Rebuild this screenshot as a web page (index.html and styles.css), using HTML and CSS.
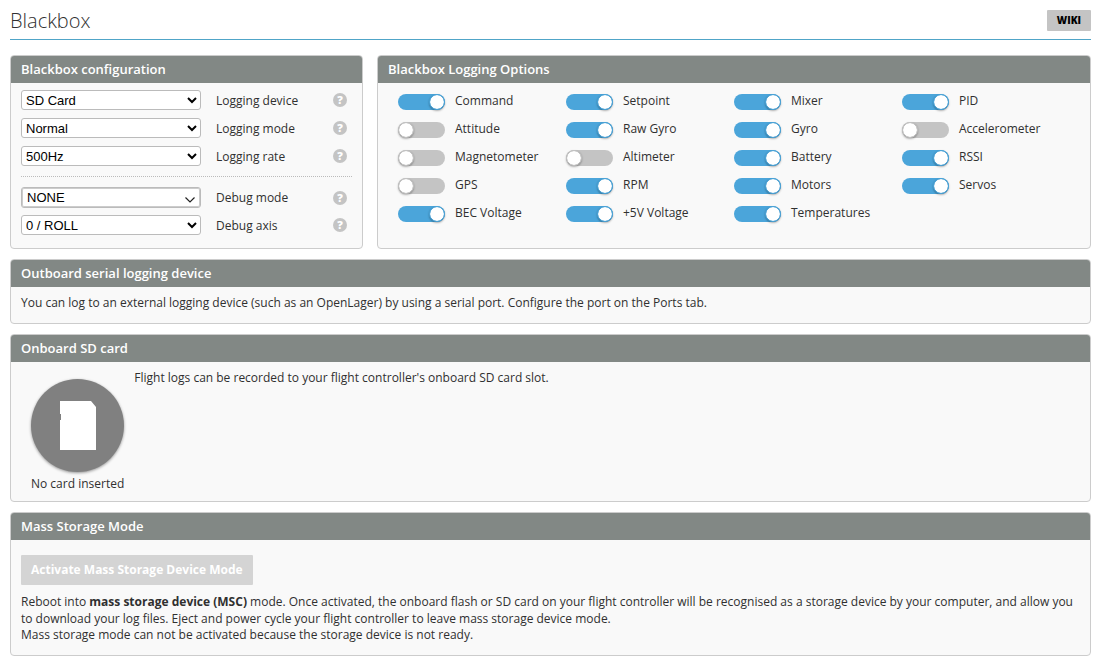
FILE: index.html
```html
<!DOCTYPE html>
<html lang="en">
<head>
<meta charset="utf-8">
<title>Blackbox</title>
<link rel="stylesheet" href="styles.css">
</head>
<body>
<main class="page">
  <header class="page-head">
    <h1 class="page-title">Blackbox</h1>
    <a class="wiki" href="#wiki">WIKI</a>
  </header>

  <div class="top-row">
    <section class="panel config">
      <h2 class="panel-title">Blackbox configuration</h2>
      <div class="config-body">
        <div class="field"><select class="select" id="device"><option>SD Card</option></select><label for="device">Logging device</label><button class="help" type="button" aria-label="Help for logging device">?</button></div>
        <div class="field"><select class="select" id="mode"><option>Normal</option></select><label for="mode">Logging mode</label><button class="help" type="button" aria-label="Help for logging mode">?</button></div>
        <div class="field"><select class="select" id="rate"><option>500Hz</option></select><label for="rate">Logging rate</label><button class="help" type="button" aria-label="Help for logging rate">?</button></div>
        <hr class="divider">
        <div class="field"><select class="select select-search" id="debug"><option>NONE</option></select><label for="debug">Debug mode</label><button class="help" type="button" aria-label="Help for debug mode">?</button></div>
        <div class="field"><select class="select" id="axis"><option>0 / ROLL</option></select><label for="axis">Debug axis</label><button class="help" type="button" aria-label="Help for debug axis">?</button></div>
      </div>
    </section>

    <section class="panel options">
      <h2 class="panel-title">Blackbox Logging Options</h2>
      <div class="options-grid">
        <label class="option"><input class="toggle" type="checkbox" checked><span>Command</span></label>
        <label class="option"><input class="toggle" type="checkbox" checked><span>Setpoint</span></label>
        <label class="option"><input class="toggle" type="checkbox" checked><span>Mixer</span></label>
        <label class="option"><input class="toggle" type="checkbox" checked><span>PID</span></label>
        <label class="option"><input class="toggle" type="checkbox"><span>Attitude</span></label>
        <label class="option"><input class="toggle" type="checkbox" checked><span>Raw Gyro</span></label>
        <label class="option"><input class="toggle" type="checkbox" checked><span>Gyro</span></label>
        <label class="option"><input class="toggle" type="checkbox"><span>Accelerometer</span></label>
        <label class="option"><input class="toggle" type="checkbox"><span>Magnetometer</span></label>
        <label class="option"><input class="toggle" type="checkbox"><span>Altimeter</span></label>
        <label class="option"><input class="toggle" type="checkbox" checked><span>Battery</span></label>
        <label class="option"><input class="toggle" type="checkbox" checked><span>RSSI</span></label>
        <label class="option"><input class="toggle" type="checkbox"><span>GPS</span></label>
        <label class="option"><input class="toggle" type="checkbox" checked><span>RPM</span></label>
        <label class="option"><input class="toggle" type="checkbox" checked><span>Motors</span></label>
        <label class="option"><input class="toggle" type="checkbox" checked><span>Servos</span></label>
        <label class="option"><input class="toggle" type="checkbox" checked><span>BEC Voltage</span></label>
        <label class="option"><input class="toggle" type="checkbox" checked><span>+5V Voltage</span></label>
        <label class="option"><input class="toggle" type="checkbox" checked><span>Temperatures</span></label>
      </div>
    </section>
  </div>

  <section class="panel">
    <h2 class="panel-title">Outboard serial logging device</h2>
    <p class="note">You can log to an external logging device (such as an OpenLager) by using a serial port. Configure the port on the Ports tab.</p>
  </section>

  <section class="panel">
    <h2 class="panel-title">Onboard SD card</h2>
    <div class="sdcard">
      <div class="sdcard-status">
        <div class="sdcard-disc">
          <svg class="sdcard-icon" viewBox="0 0 36 49" aria-hidden="true"><path fill="#fff" d="M0 0H31L36 6V49H0V19H1V13H0Z"/></svg>
        </div>
        <span>No card inserted</span>
      </div>
      <p class="sdcard-note">Flight logs can be recorded to your flight controller's onboard SD card slot.</p>
    </div>
  </section>

  <section class="panel">
    <h2 class="panel-title">Mass Storage Mode</h2>
    <div class="msc">
      <button class="msc-button" type="button" disabled>Activate Mass Storage Device Mode</button>
      <p>Reboot into <strong>mass storage device (MSC)</strong> mode. Once activated, the onboard flash or SD card on your flight controller will be recognised as a storage device by your computer, and allow you to download your log files. Eject and power cycle your flight controller to leave mass storage device mode.</p>
      <p class="msc-warning">Mass storage mode can not be activated because the storage device is not ready.</p>
    </div>
  </section>
</main>
</body>
</html>
```
FILE: styles.css
```css
*, *::before { box-sizing: border-box; }

body {
  margin: 0;
  background: #fff;
  color: #303030;
  font-family: "Open Sans", "Liberation Sans", sans-serif;
  font-size: 12px;
  line-height: 17px;
}

h1, h2, p { margin: 0; }

.page {
  display: flex;
  flex-direction: column;
  gap: 10px;
  padding: 0 9px 10px 10px;
}

.page-head {
  display: flex;
  align-items: center;
  justify-content: space-between;
  height: 40px;
  padding-top: 2px;
  margin-bottom: 5px;
  border-bottom: 1px solid #50a5c8;
}

.page-title {
  font-size: 20px;
  line-height: 28px;
  font-weight: 300;
}

.wiki {
  padding: 2px 10px;
  border-radius: 1px;
  background: #c4c4c4;
  color: #000;
  font-size: 10px;
  font-weight: 800;
  text-decoration: none;
}

.top-row {
  display: flex;
  gap: 14px;
}

.config { flex: 0 0 353px; }
.options { flex: 1; }

.panel {
  overflow: hidden;
  border: 1px solid #ccc;
  border-radius: 4px;
  background: #f9f9f9;
}

.panel-title {
  padding: 0 10px;
  background: #828885;
  color: #fff;
  font-size: 13px;
  line-height: 27px;
  font-weight: 600;
}

.config-body {
  display: flex;
  flex-direction: column;
  gap: 8px;
  padding: 7px 10px 13px;
}

.field {
  display: grid;
  grid-template-columns: 180px 1fr 14px;
  column-gap: 15px;
  align-items: center;
  height: 20px;
  padding-right: 5px;
}

.select {
  width: 100%;
  height: 20px;
  padding: 0;
  border: 1px solid #bbb;
  border-radius: 3px;
  background-color: #fff;
  color: #000;
  font-family: "Liberation Sans", Arial, sans-serif;
  font-size: 13px;
}

.select-search {
  appearance: none;
  height: 21px;
  padding: 0 5px;
  box-shadow: inset 0 0 0 1px #ccc;
  background: #fff url("data:image/svg+xml,%3Csvg xmlns='http://www.w3.org/2000/svg' width='10' height='6'%3E%3Cpath d='M.5.5 5 5 9.500.5' fill='none' stroke='%23222' stroke-width='1.200'/%3E%3C/svg%3E") no-repeat right 5px bottom 4px;
}

.help {
  width: 14px;
  height: 14px;
  padding: 0;
  border: 0;
  border-radius: 50%;
  background: #c4c4c4;
  color: #fff;
  font: 800 11px/14px "Open Sans", sans-serif;
  text-align: center;
}

.divider {
  width: 100%;
  margin: 2px 0;
  border: 0;
  border-top: 1px dotted #bbb;
}

.options-grid {
  display: grid;
  grid-template-columns: repeat(4, 1fr);
  grid-auto-rows: 28px;
  padding: 9px 20px 10px;
}

.option {
  display: flex;
  align-items: flex-start;
  gap: 10px;
}

.toggle {
  appearance: none;
  flex: none;
  width: 47px;
  height: 16px;
  margin: 2px 0 0;
  border-radius: 8px;
  background: #c4c4c4;
}

.toggle::before {
  content: "";
  display: block;
  width: 16px;
  height: 16px;
  border: 1px solid #c4c4c4;
  border-radius: 50%;
  background: #fff;
  background-clip: padding-box;
  box-shadow: 0 1px 2px rgba(0, 0, 0, 0.3);
}

.toggle:checked { background: #4ba5da; }

.toggle:checked::before {
  margin-left: auto;
  border-color: #4ba5da;
}

.note { padding: 7px 10px 12px; }

.sdcard {
  display: flex;
  padding: 7px 10px 9px;
}

.sdcard-status {
  display: flex;
  flex-direction: column;
  align-items: center;
  gap: 3px;
  padding: 10px 10px 0;
}

.sdcard-disc {
  display: grid;
  place-items: center;
  width: 93px;
  height: 93px;
  border-radius: 50%;
  background: #808080;
  box-shadow: 0 1px 3px rgba(0, 0, 0, 0.4);
}

.sdcard-icon {
  width: 36px;
  height: 49px;
}

.msc { padding: 15px 10px 12px; }

.msc-button {
  display: block;
  margin-bottom: 8px;
  padding: 0 10px;
  border: 0;
  border-radius: 1px;
  background: #d4d4d4;
  color: #fff;
  font: 700 12px/30px "Open Sans", sans-serif;
}

.msc-warning { line-height: 16px; }
```
